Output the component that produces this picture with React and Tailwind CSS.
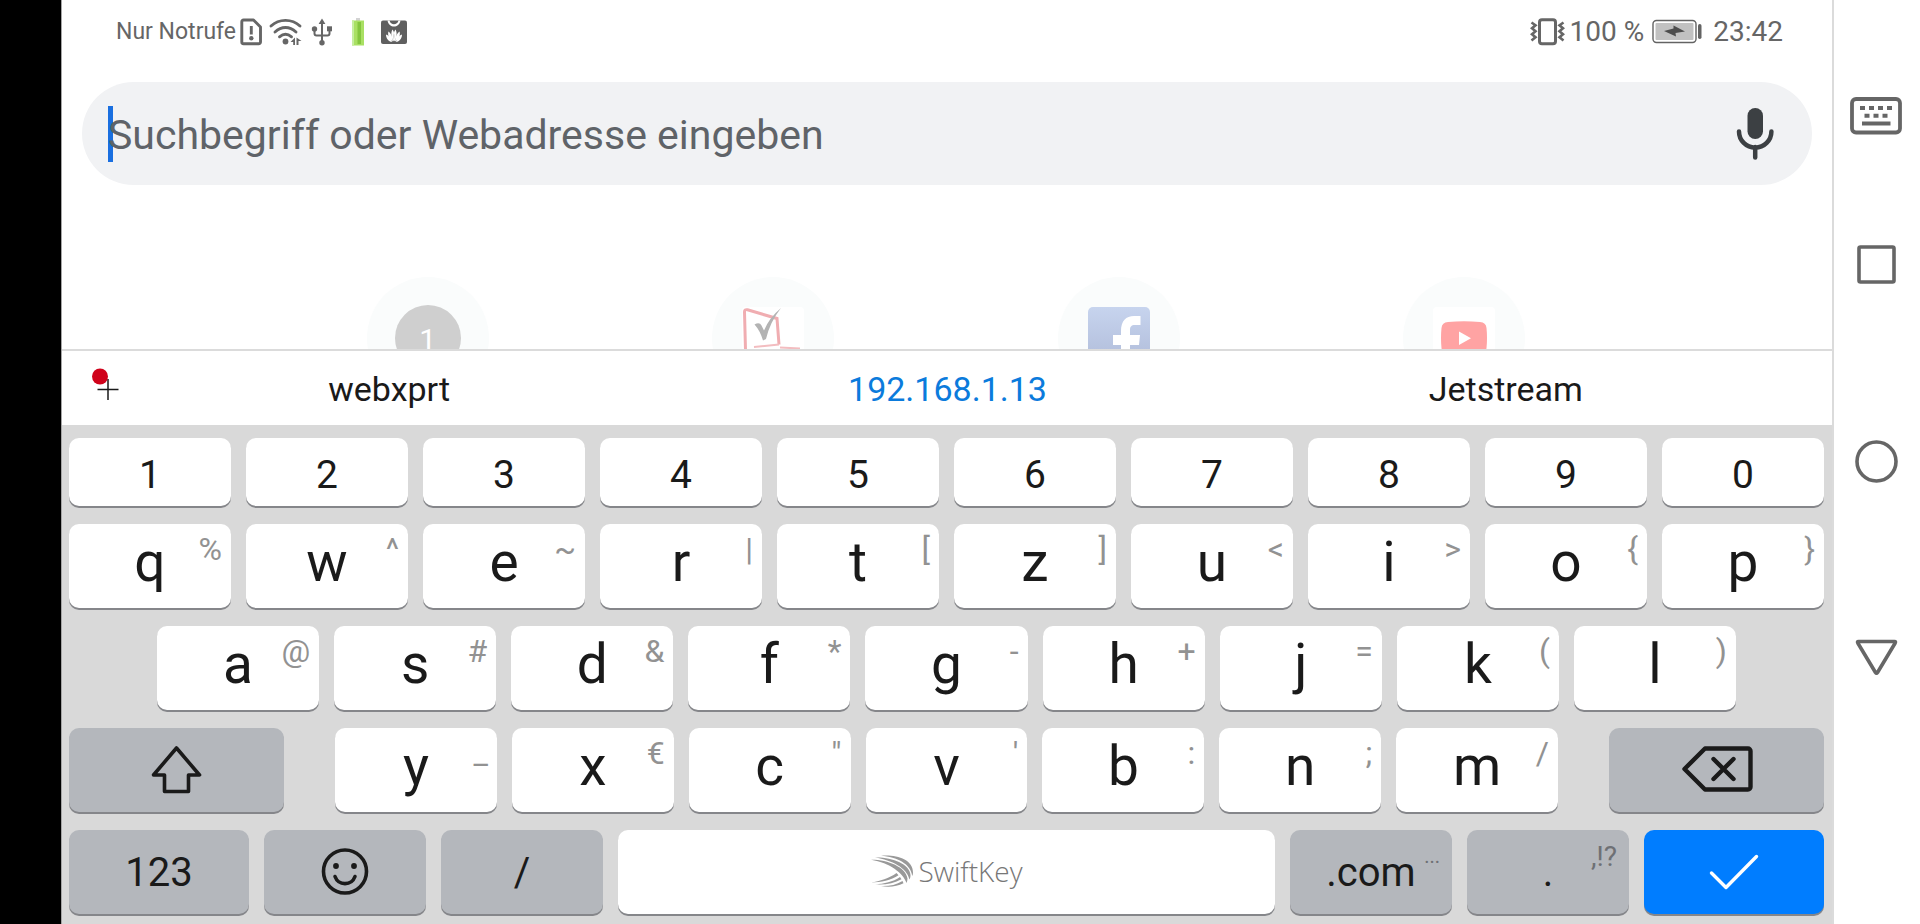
import React, { useState } from "react";

const numberRow = ["1", "2", "3", "4", "5", "6", "7", "8", "9", "0"];

const topRow = [
  ["q", "%"], ["w", "^"], ["e", "~"], ["r", "|"], ["t", "["],
  ["z", "]"], ["u", "<"], ["i", ">"], ["o", "{"], ["p", "}"],
];

const homeRow = [
  ["a", "@"], ["s", "#"], ["d", "&"], ["f", "*"], ["g", "-"],
  ["h", "+"], ["j", "="], ["k", "("], ["l", ")"],
];

const bottomRow = [
  ["y", "_"], ["x", "€"], ["c", '"'], ["v", "'"], ["b", ":"], ["n", ";"], ["m", "/"],
];

const keyBase =
  "relative flex items-center justify-center rounded-[10px] text-[#1a1a1a] shadow-[0_2px_0_#85868a]";

const LetterKey = ({ letter, hint, onPress }) => (
  <button
    type="button"
    onClick={() => onPress(letter)}
    className={`${keyBase} h-[84px] min-w-0 flex-1 bg-white pb-2 text-[55px] leading-none`}
  >
    {letter}
    <span className="absolute top-[9px] right-[9px] text-[32px] leading-none text-[#929292]">
      {hint}
    </span>
  </button>
);

const StatusBar = () => (
  <div className="flex h-[62px] items-center justify-between pt-0.5 pr-[49px] pl-[54px] text-[#666]">
    <div className="flex items-center">
      <span className="text-[23px]">Nur Notrufe</span>
      {/* SIM */}
      <svg className="ml-[3px] h-7 w-6" viewBox="0 0 24 28" fill="none" stroke="currentColor" strokeWidth="2.9">
        <path d="M4.500 2H14.500L21.500 9V24a1.700 1.700 0 0 1-1.700 1.700H4.500A1.700 1.700 0 0 1 2.800 24V3.700A1.700 1.700 0 0 1 4.500 2z" strokeLinejoin="round" />
        <path d="M12.300 8v8.500" />
        <circle cx="12.300" cy="20.300" r="2.200" fill="currentColor" stroke="none" />
      </svg>
      {/* WLAN */}
      <svg className="ml-[5px] h-7 w-9" viewBox="0 0 36 28" fill="none" stroke="currentColor" strokeWidth="2.900" strokeLinecap="round">
        <path d="M3 8C11 .5 24 .5 32 8" />
        <path d="M7 14c6.500-6 14.500-6 21 0" />
        <path d="M11.500 18.800c4-3.300 8-3.300 12 0" />
        <circle cx="17.500" cy="23.500" r="2.900" fill="currentColor" stroke="none" />
        <path d="M22.500 24l4.500-4.500v7.500h-1.800v-3zM28.500 19.500l5 3.500h-3v4h-2z" fill="currentColor" stroke="none" />
      </svg>
      {/* USB */}
      <svg className="ml-[6px] h-7 w-6" viewBox="0 0 24 28" fill="none" stroke="currentColor" strokeWidth="2">
        <path d="M12 5v18M4.500 12v3.500a2 2 0 0 0 2 2h11a2 2 0 0 0 2-2V12" />
        <path d="M12 .5l3.400 5.500H8.600z" fill="currentColor" stroke="none" />
        <circle cx="12" cy="24.800" r="2.700" fill="currentColor" stroke="none" />
        <circle cx="4.500" cy="11" r="2.700" fill="currentColor" stroke="none" />
        <path d="M17 8.300h5v5h-5z" fill="currentColor" stroke="none" />
      </svg>
      {/* Battery */}
      <svg className="ml-4 h-7 w-4" viewBox="0 0 16 28">
        <path d="M6 0h4v3H6z" fill="#d3d3d3" />
        <path d="M2 2.500h12v25H2z" fill="#a9e063" />
        <path d="M7.500 4H11v22H7.500z" fill="#84c63e" />
        <path d="M2 2.500h2v25H2z" fill="#c6eea0" />
      </svg>
      {/* App gallery */}
      <svg className="ml-[14px] h-7 w-7" viewBox="0 0 28 28">
        <rect x="1" y="2.500" width="26" height="23.500" rx="2" fill="#5f5f5f" />
        <path d="M7.500 2.500c1.500 8 11.500 8 13 0h-2c-1.200 5-7.800 5-9 0z" fill="#fff" />
        <g fill="#fff">
          <path d="M13.700 23.500c-2.700-4-3-9-1.200-12 2 2 2 7 1.200 12zM14.300 23.500c2.700-4 3-9 1.200-12-2 2-2 7-1.200 12z" />
          <path d="M12.900 23.500c-3.500-2-5.500-6-4.500-10 2.700 1.500 4.300 6 4.500 10zM15.100 23.500c3.500-2 5.500-6 4.500-10-2.700 1.500-4.300 6-4.500 10z" />
          <path d="M12 24c-3.500-.5-6-3.500-6-7.500 3 1 5 4 6 7.500zM16 24c3.500-.5 6-3.500 6-7.500-3 1-5 4-6 7.500z" />
        </g>
      </svg>
    </div>
    <div className="flex items-center text-[28px]">
      {/* Vibration */}
      <svg className="h-7 w-9" viewBox="0 0 36 28" fill="none" stroke="currentColor">
        <rect x="9.500" y="1.700" width="16" height="24" rx="2.500" strokeWidth="3" />
        <path d="M1.500 4.500l4 2.800-3.500 3 3.500 3-3.500 3 3.500 3-4 3.200M33.500 4.500l-4 2.800 3.500 3-3.500 3 3.500 3-3.500 3 4 3.200" strokeWidth="2.600" />
      </svg>
      <span className="ml-1">100 %</span>
      <svg className="ml-2 h-7 w-[50px]" viewBox="0 0 50 28">
        <rect x="1" y="2.500" width="43" height="22" rx="3.500" fill="#fff" stroke="#636363" strokeWidth="1.400" />
        <rect x="3.500" y="5" width="38" height="17" rx="1" fill="#c1c1c1" />
        <path d="M12 13l9.500-2.500V7.500L33 13.500l-9.500 1.500.5 3.500z" fill="#4d4d4d" />
        <rect x="46" y="6" width="3.500" height="15" rx="1.700" fill="#636363" />
      </svg>
      <span className="ml-[11px]">23:42</span>
    </div>
  </div>
);

const SearchBar = ({ value, onChange }) => (
  <div className="mx-5 mt-5 flex h-[103px] items-center rounded-full bg-[#f1f2f4] pr-[38px] pl-[26px]">
    <span className="-mr-[5px] h-14 w-[5px] bg-[#1a6fe0]" />
    <input
      type="text"
      aria-label="Suchbegriff oder Webadresse eingeben"
      placeholder="Suchbegriff oder Webadresse eingeben"
      value={value}
      onChange={(e) => onChange(e.target.value)}
      className="h-14 min-w-0 flex-1 bg-transparent pt-1 text-[41px] text-[#3c4043] outline-none placeholder:text-[#5f6368]"
    />
    <button type="button" aria-label="Sprachsuche">
      <svg className="h-[52px] w-[38px]" viewBox="0 0 38 52" fill="none" stroke="#3c4043">
        <rect x="11.500" y="0" width="15.500" height="31" rx="7.700" fill="#3c4043" stroke="none" />
        <path d="M3 23.500a16.200 16.200 0 0 0 32.400 0M19.200 39v10.500" strokeWidth="4.500" strokeLinecap="round" />
      </svg>
    </button>
  </div>
);

const Tile = ({ label, children }) => (
  <a
    href="#"
    aria-label={label}
    className="flex h-[122px] w-[122px] items-center justify-center justify-self-center rounded-full bg-[#fafcfc]"
  >
    {children}
  </a>
);

const Shortcuts = () => (
  <div className="min-h-0 flex-1 overflow-hidden">
    <div className="grid grid-cols-4 pt-[92px] pr-[195px] pl-[193px]">
      <Tile label="1">
        <span className="flex h-[66px] w-[66px] items-center justify-center rounded-full bg-[#cfcfcf] pt-1 text-[30px] leading-none text-white">
          1
        </span>
      </Tile>
      <Tile label="WebXPRT">
        <svg className="h-[62px] w-[62px]" viewBox="0 0 62 62">
          <rect width="62" height="62" rx="4" fill="#fff" />
          <path d="M3.500 43L2.500 5q0-3 3-2.200L35 11.500l2 26" fill="none" stroke="#f0adb1" strokeWidth="3" />
          <path d="M37 37.500L12 40M38 40.500l20 1" fill="none" stroke="#f3bdc0" strokeWidth="2" />
          <path d="M12.500 17.500q5-3 7 1l2.500 5Q27 11 39 1 28 15 24 32l-3 1.500q-3-10-8.500-16z" fill="#b3b3b3" />
        </svg>
      </Tile>
      <Tile label="Facebook">
        <svg className="h-[62px] w-[62px]" viewBox="0 0 62 62">
          <defs>
            <linearGradient id="fb" x1="0" y1="0" x2="0" y2="1">
              <stop offset="0" stopColor="#c7d4ee" />
              <stop offset="1" stopColor="#aebad8" />
            </linearGradient>
          </defs>
          <rect width="62" height="62" rx="5" fill="url(#fb)" />
          <path d="M33 62V38h-8V28h8v-4c0-10 5-15 13-15h6.500v9H47c-4 0-5 2-5 5v5h10l-1 10h-9v24z" fill="#fff" />
        </svg>
      </Tile>
      <Tile label="YouTube">
        <svg className="h-[62px] w-[62px]" viewBox="0 0 62 62">
          <rect width="62" height="62" rx="4" fill="#fff" />
          <path d="M15 15q16-1.500 32 0 6 .5 6.500 6 1 10 0 20-.5 5.500-6.500 6-16 1.500-32 0-6-.5-6.500-6-1-10 0-20 .5-5.500 6.500-6z" fill="#ffa3a3" />
          <path d="M26 24.500v13.500l12-6.800z" fill="#fff" />
        </svg>
      </Tile>
    </div>
  </div>
);

const Suggestions = ({ onPick }) => (
  <div className="flex h-[76px] border-t-2 border-[#dbdbdb] bg-white pr-[47px]">
    <button type="button" aria-label="Menü" className="-mr-3 w-[60px] pl-7">
      <svg className="h-10 w-8" viewBox="0 0 32 40">
        <path d="M18 11v21M7.500 21.500h21" stroke="#1a1a1a" strokeWidth="1.500" />
        <circle cx="10" cy="8.500" r="8" fill="#d0021b" />
      </svg>
    </button>
    <div className="grid flex-1 grid-cols-3 pt-0.5 text-[34px] text-[#1a1a1a]">
      <button type="button" onClick={() => onPick("webxprt")}>webxprt</button>
      <button type="button" onClick={() => onPick("192.168.1.13")} className="text-[#0b7bdc]">192.168.1.13</button>
      <button type="button" onClick={() => onPick("Jetstream")}>Jetstream</button>
    </div>
  </div>
);

const SwiftKeyLogo = () => (
  <svg className="h-8 w-11" viewBox="0 0 44 32" fill="#999">
    <path d="M11 .8C26 -.5 43 4 43 17.500c0 1.500-.3 2.500-.8 3.500C41 9 27 2 11 .8z" />
    <path d="M5 2.500C22 2 40 9 40.500 20c0 2-.5 3.500-1 4.500C37 13 22 5 5 2.500z" />
    <path d="M1 4.800C17 4.500 36 12 37.500 23.500c0 1.500-.3 3-1 4.500C33 18 20 8 1 4.800z" />
    <path d="M1 27.500c9-1.500 18-4 25.500-9.500l2 2.200C21 25.500 11 27 1 27.500z" />
    <path d="M5 29.300c9-.5 18-2.300 25-7.300l1.500 2.200C24 28.500 15 30 5 29.300z" />
    <path d="M11 31c8 .3 15-1 21.500-5l1 2.300C27 31.500 19 32.500 11 31z" />
  </svg>
);

const Keyboard = ({ onPress, onDelete }) => (
  <div className="flex flex-col gap-[18px] bg-[#d9d9d9] pt-[13px] pr-2 pb-[10px] pl-[7px]">
    <div className="flex gap-[15px]">
      {numberRow.map((n) => (
        <button
          key={n}
          type="button"
          onClick={() => onPress(n)}
          className={`${keyBase} h-[68px] flex-1 bg-white pt-1.5 text-[39px] leading-none`}
        >
          {n}
        </button>
      ))}
    </div>

    <div className="flex gap-[15px]">
      {topRow.map(([letter, hint]) => (
        <LetterKey key={letter} letter={letter} hint={hint} onPress={onPress} />
      ))}
    </div>

    <div className="flex gap-[15px] px-[88px]">
      {homeRow.map(([letter, hint]) => (
        <LetterKey key={letter} letter={letter} hint={hint} onPress={onPress} />
      ))}
    </div>

    <div className="flex">
      <button type="button" aria-label="Umschalt" className={`${keyBase} h-[84px] w-[12.25%] bg-[#b4b7bc]`}>
        <svg className="h-12 w-[52px]" viewBox="0 0 52 48" fill="none" stroke="#1a1a1a" strokeWidth="3.600" strokeLinejoin="round">
          <path d="M26.500 2L49.500 29H38.500V45.500H14.500V29H3.500z" />
        </svg>
      </button>
      <div className="mx-[51px] flex flex-1 gap-[15px]">
        {bottomRow.map(([letter, hint]) => (
          <LetterKey key={letter} letter={letter} hint={hint} onPress={onPress} />
        ))}
      </div>
      <button type="button" aria-label="Löschen" onClick={onDelete} className={`${keyBase} h-[84px] w-[12.25%] bg-[#b4b7bc]`}>
        <svg className="h-12 w-[72px]" viewBox="0 0 72 48" fill="none" stroke="#1a1a1a" strokeWidth="4.400" strokeLinecap="round" strokeLinejoin="round">
          <path d="M24 2.500h43a2.500 2.500 0 0 1 2.500 2.500v36a2.500 2.500 0 0 1-2.500 2.500H24L3.500 23z" />
          <path d="M32.500 13l20 20M52.500 13l-20 20" />
        </svg>
      </button>
    </div>

    <div className="flex h-[84px] gap-[15px] text-[40px] leading-none">
      <button type="button" className={`${keyBase} flex-[180] bg-[#b4b7bc] pt-0.5`}>123</button>
      <button type="button" aria-label="Emoji" className={`${keyBase} flex-[162] bg-[#b4b7bc]`}>
        <svg className="h-12 w-12" viewBox="0 0 48 48" fill="none" stroke="#1a1a1a" strokeWidth="3.600" strokeLinecap="round">
          <circle cx="24" cy="23.500" r="21.500" />
          <path d="M14 28.500c3.500 9.500 16.500 9.500 20 0" />
          <circle cx="15" cy="18" r="2.900" fill="#1a1a1a" stroke="none" />
          <circle cx="33" cy="18" r="2.900" fill="#1a1a1a" stroke="none" />
        </svg>
      </button>
      <button type="button" onClick={() => onPress("/")} className={`${keyBase} flex-[162] bg-[#b4b7bc] pt-0.5`}>/</button>
      <button
        type="button"
        onClick={() => onPress(" ")}
        className={`${keyBase} flex-[657] gap-1 bg-white pb-0.5 font-['Open_Sans',sans-serif] text-[28px] font-light`}
      >
        <SwiftKeyLogo />
        <span className="text-[#777]">SwiftKey</span>
      </button>
      <button type="button" onClick={() => onPress(".com")} className={`${keyBase} flex-[162] bg-[#b4b7bc] pt-0.5`}>
        .com
        <span className="absolute top-4 right-3 text-[20px] leading-none text-[#6e7074]">...</span>
      </button>
      <button type="button" onClick={() => onPress(".")} className={`${keyBase} flex-[162] bg-[#b4b7bc] pt-0.5`}>
        .
        <span className="absolute top-[13px] right-3 text-[28px] leading-none text-[#6e7074]">,!?</span>
      </button>
      <button type="button" aria-label="Eingabe" className={`${keyBase} flex-[180] bg-[#007dff]`}>
        <svg className="h-9 w-[50px]" viewBox="0 0 50 36" fill="none" stroke="#fff" strokeWidth="3.400" strokeLinecap="round" strokeLinejoin="round">
          <path d="M2.500 19L17 33.500 47.500 2.500" />
        </svg>
      </button>
    </div>
  </div>
);

const NavBar = () => (
  <nav className="flex w-[88px] flex-col items-center border-l-2 border-[#dbdbdb] bg-white pt-[97px] pr-0.5 text-[#666]">
    <button type="button" aria-label="Tastatur">
      <svg className="h-[38px] w-[52px]" viewBox="0 0 52 38" fill="none" stroke="currentColor">
        <rect x="2" y="2" width="48" height="33.500" rx="4" strokeWidth="3.800" />
        <path d="M10 11h32" strokeWidth="4" strokeDasharray="5 4" />
        <path d="M14.500 18.800h24" strokeWidth="4" strokeDasharray="5 4" />
        <path d="M12 26.500h28.500" strokeWidth="4" />
      </svg>
    </button>
    <div className="mt-[110px] flex flex-col items-center gap-[156px]">
      <button type="button" aria-label="Übersicht">
        <svg className="h-[39px] w-[39px]" viewBox="0 0 39 39" fill="none" stroke="currentColor" strokeWidth="3.600">
          <rect x="2" y="2" width="35" height="35" rx="1.500" />
        </svg>
      </button>
      <button type="button" aria-label="Startbildschirm">
        <svg className="h-[43px] w-[43px]" viewBox="0 0 43 43" fill="none" stroke="currentColor" strokeWidth="3.600">
          <circle cx="21.500" cy="21.500" r="19.500" />
        </svg>
      </button>
      <button type="button" aria-label="Zurück">
        <svg className="h-[37px] w-[43px]" viewBox="0 0 43 37" fill="none" stroke="currentColor" strokeWidth="3.600" strokeLinejoin="round">
          <path d="M3.500 2.500h36q1.500 0 .7 1.500L22.500 33.500q-1 1.500-2 0L2.800 4q-.8-1.500.7-1.500z" />
        </svg>
      </button>
    </div>
  </nav>
);

const App = () => {
  const [query, setQuery] = useState("");

  return (
    <div className="flex h-screen bg-black font-[Roboto,sans-serif]">
      <main className="ml-[61px] flex min-w-0 flex-1 flex-col border-l border-[#a5a5a5] bg-white">
        <StatusBar />
        <SearchBar value={query} onChange={setQuery} />
        <Shortcuts />
        <Suggestions onPick={setQuery} />
        <Keyboard
          onPress={(text) => setQuery(query + text)}
          onDelete={() => setQuery(query.slice(0, -1))}
        />
      </main>
      <NavBar />
    </div>
  );
};

export default App;
